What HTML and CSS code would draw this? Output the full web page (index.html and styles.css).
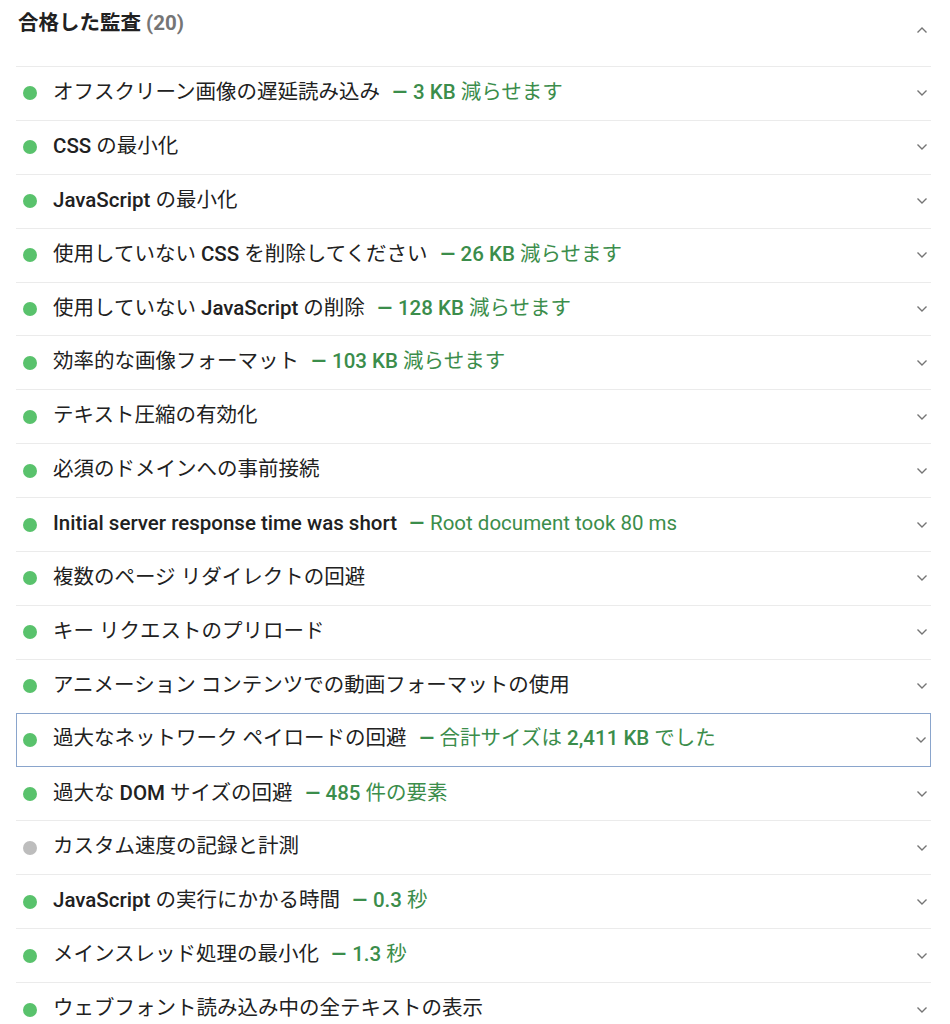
FILE: index.html
```html
<!DOCTYPE html>
<html lang="ja">
<head>
<meta charset="utf-8">
<title>合格した監査</title>
<link rel="stylesheet" href="styles.css">
</head>
<body>
<section class="group">
  <header class="group-head">
    <h2 class="group-title">合格した監査 <span class="count">(20)</span></h2>
    <svg class="chev up" viewBox="0 0 12 8" width="12" height="8"><path d="M1.5 6.5L6 2l4.5 4.5"/></svg>
  </header>

  <div class="row"><span class="dot"></span><span class="label">オフスクリーン画像の遅延読み込み</span><span class="value"><span class="dash">–</span> <b>3 KB</b> 減らせます</span><svg class="chev" viewBox="0 0 12 8" width="12" height="8"><path d="M1.5 1.5L6 6l4.5-4.5"/></svg></div>
  <div class="row"><span class="dot"></span><span class="label"><b>CSS</b> の最小化</span><svg class="chev" viewBox="0 0 12 8" width="12" height="8"><path d="M1.5 1.5L6 6l4.5-4.5"/></svg></div>
  <div class="row"><span class="dot"></span><span class="label"><b>JavaScript</b> の最小化</span><svg class="chev" viewBox="0 0 12 8" width="12" height="8"><path d="M1.5 1.5L6 6l4.5-4.5"/></svg></div>
  <div class="row"><span class="dot"></span><span class="label">使用していない <b>CSS</b> を削除してください</span><span class="value"><span class="dash">–</span> <b>26 KB</b> 減らせます</span><svg class="chev" viewBox="0 0 12 8" width="12" height="8"><path d="M1.5 1.5L6 6l4.5-4.5"/></svg></div>
  <div class="row"><span class="dot"></span><span class="label">使用していない <b>JavaScript</b> の削除</span><span class="value"><span class="dash">–</span> <b>128 KB</b> 減らせます</span><svg class="chev" viewBox="0 0 12 8" width="12" height="8"><path d="M1.5 1.5L6 6l4.5-4.5"/></svg></div>
  <div class="row"><span class="dot"></span><span class="label">効率的な画像フォーマット</span><span class="value"><span class="dash">–</span> <b>103 KB</b> 減らせます</span><svg class="chev" viewBox="0 0 12 8" width="12" height="8"><path d="M1.5 1.5L6 6l4.5-4.5"/></svg></div>
  <div class="row"><span class="dot"></span><span class="label">テキスト圧縮の有効化</span><svg class="chev" viewBox="0 0 12 8" width="12" height="8"><path d="M1.5 1.5L6 6l4.5-4.5"/></svg></div>
  <div class="row"><span class="dot"></span><span class="label">必須のドメインへの事前接続</span><svg class="chev" viewBox="0 0 12 8" width="12" height="8"><path d="M1.5 1.5L6 6l4.5-4.5"/></svg></div>
  <div class="row"><span class="dot"></span><span class="label"><b>Initial server response time was short</b></span><span class="value"><span class="dash">–</span> Root document took 80 ms</span><svg class="chev" viewBox="0 0 12 8" width="12" height="8"><path d="M1.5 1.5L6 6l4.5-4.5"/></svg></div>
  <div class="row"><span class="dot"></span><span class="label">複数のページ リダイレクトの回避</span><svg class="chev" viewBox="0 0 12 8" width="12" height="8"><path d="M1.5 1.5L6 6l4.5-4.5"/></svg></div>
  <div class="row"><span class="dot"></span><span class="label">キー リクエストのプリロード</span><svg class="chev" viewBox="0 0 12 8" width="12" height="8"><path d="M1.5 1.5L6 6l4.5-4.5"/></svg></div>
  <div class="row"><span class="dot"></span><span class="label">アニメーション コンテンツでの動画フォーマットの使用</span><svg class="chev" viewBox="0 0 12 8" width="12" height="8"><path d="M1.5 1.5L6 6l4.5-4.5"/></svg></div>
  <div class="row focus"><span class="dot"></span><span class="label">過大なネットワーク ペイロードの回避</span><span class="value"><span class="dash">–</span> 合計サイズは <b>2,411 KB</b> でした</span><svg class="chev" viewBox="0 0 12 8" width="12" height="8"><path d="M1.5 1.5L6 6l4.5-4.5"/></svg></div>
  <div class="row"><span class="dot"></span><span class="label">過大な <b>DOM</b> サイズの回避</span><span class="value"><span class="dash">–</span> <b>485</b> 件の要素</span><svg class="chev" viewBox="0 0 12 8" width="12" height="8"><path d="M1.5 1.5L6 6l4.5-4.5"/></svg></div>
  <div class="row"><span class="dot gray"></span><span class="label">カスタム速度の記録と計測</span><svg class="chev" viewBox="0 0 12 8" width="12" height="8"><path d="M1.5 1.5L6 6l4.5-4.5"/></svg></div>
  <div class="row"><span class="dot"></span><span class="label"><b>JavaScript</b> の実行にかかる時間</span><span class="value"><span class="dash">–</span> <b>0.3</b> 秒</span><svg class="chev" viewBox="0 0 12 8" width="12" height="8"><path d="M1.5 1.5L6 6l4.5-4.5"/></svg></div>
  <div class="row"><span class="dot"></span><span class="label">メインスレッド処理の最小化</span><span class="value"><span class="dash">–</span> <b>1.3</b> 秒</span><svg class="chev" viewBox="0 0 12 8" width="12" height="8"><path d="M1.5 1.5L6 6l4.5-4.5"/></svg></div>
  <div class="row"><span class="dot"></span><span class="label">ウェブフォント読み込み中の全テキストの表示</span><svg class="chev" viewBox="0 0 12 8" width="12" height="8"><path d="M1.5 1.5L6 6l4.5-4.5"/></svg></div>
</section>
</body>
</html>
```

FILE: styles.css
```css
html, body {
  margin: 0;
  padding: 0;
  background: #ffffff;
}

body {
  font-family: Roboto, "Noto Sans CJK JP", sans-serif;
  color: #212121;
  overflow: hidden;
}

.group {
  margin: 0 19px 0 16px;
}

.group-head {
  height: 66px;
  display: flex;
  align-items: flex-start;
  justify-content: space-between;
}

.group-title {
  margin: 9px 0 0 2px;
  font-size: 20.5px;
  line-height: 28px;
  font-weight: 700;
  color: #212121;
}

.count {
  color: #757575;
  font-family: Roboto, sans-serif;
  font-weight: 700;
}

.chev {
  flex: none;
  fill: none;
  stroke: #757575;
  stroke-width: 1.4;
  margin-left: auto;
  margin-right: 3px;
}

.chev.up {
  margin-top: 26px;
}

.row {
  box-sizing: border-box;
  height: 53.9px;
  padding-bottom: 3px;
  border-top: 1px solid #ebebeb;
  display: flex;
  align-items: center;
  font-size: 20.5px;
  line-height: 28px;
  white-space: nowrap;
}

.row.focus {
  border: 1px solid #8aa5cc;
}

.row.focus + .row {
  border-top-color: transparent;
}

.dot {
  flex: none;
  width: 14px;
  height: 14px;
  border-radius: 50%;
  background: #59c26c;
  margin-left: 7px;
  margin-right: 16px;
  position: relative;
  top: 1.5px;
}

.row.focus .dot {
  margin-left: 6px;
}

.dot.gray {
  background: #bdbdbd;
}

.label {
  font-weight: 400;
}

.label b,
.value b {
  font-weight: 500;
}

.value {
  margin-left: 13px;
  color: #3b8d4b;
}

.dash {
  font-weight: 700;
  display: inline-block;
  transform: scaleX(1.25);
  margin-right: 2px;
}

.row .chev {
  position: relative;
  top: 1.5px;
}
```
